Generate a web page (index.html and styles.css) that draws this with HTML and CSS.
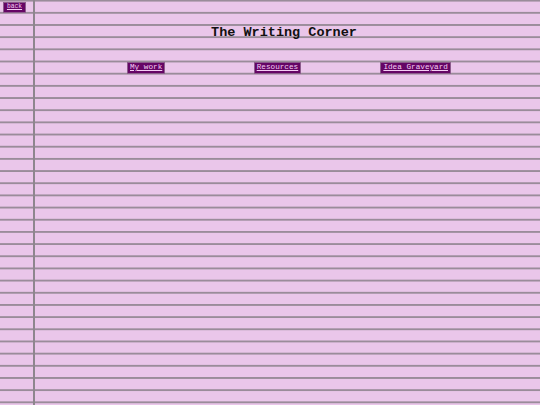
FILE: index.html
```html
<!DOCTYPE html>
<html>
<head>
<meta charset="utf-8">
<link rel="stylesheet" href="styles.css">
</head>
<body>
<div class="page">
  <div class="margin">
    <a class="btn back" href="#">back</a>
  </div>
  <div class="main">
    <h1 class="title">The Writing Corner</h1>
    <nav class="nav">
      <div class="cell"><a class="btn" href="#">My work</a></div>
      <div class="cell"><a class="btn" href="#">Resources</a></div>
      <div class="cell"><a class="btn" href="#">Idea Graveyard</a></div>
    </nav>
  </div>
</div>
</body>
</html>
```

FILE: styles.css
```css
html, body {
  margin: 0;
  padding: 0;
  height: 100%;
}
body {
  background-color: #eac6ea;
  background-image: linear-gradient(to bottom, #9a8c9a 0, #9a8c9a 1.6px, transparent 1.6px);
  background-size: 100% 12.18px;
  background-position: 0 -0.3px;
  font-family: "Liberation Mono", "DejaVu Sans Mono", monospace;
  overflow: hidden;
}
.page {
  display: flex;
  height: 405px;
}
.margin {
  width: 35px;
  flex: none;
  border-right: 2px solid #8e868e;
  padding: 2px 0 0 3px;
  box-sizing: border-box;
  display: flex;
  align-items: flex-start;
}
.main {
  flex: 1;
  display: flex;
  flex-direction: column;
}
.title {
  margin: 25px 7px 0 0;
  text-align: center;
  font-size: 13.5px;
  line-height: 16px;
  font-weight: bold;
  color: #111;
}
.nav {
  display: grid;
  grid-template-columns: repeat(3, 126.7px);
  margin: 21px 0 0 92px;
}
.cell {
  display: flex;
}
.btn {
  display: inline-block;
  background: #650565;
  border: 1px solid #8c5c8c;
  color: #f4cdf4;
  font-size: 7.7px;
  line-height: 9.5px;
  padding: 0 2px;
  text-decoration: underline;
}
.back {
  font-size: 6.3px;
  line-height: 8.5px;
  padding: 0 2.5px;
  width: 16px;
  text-align: center;
}
```
